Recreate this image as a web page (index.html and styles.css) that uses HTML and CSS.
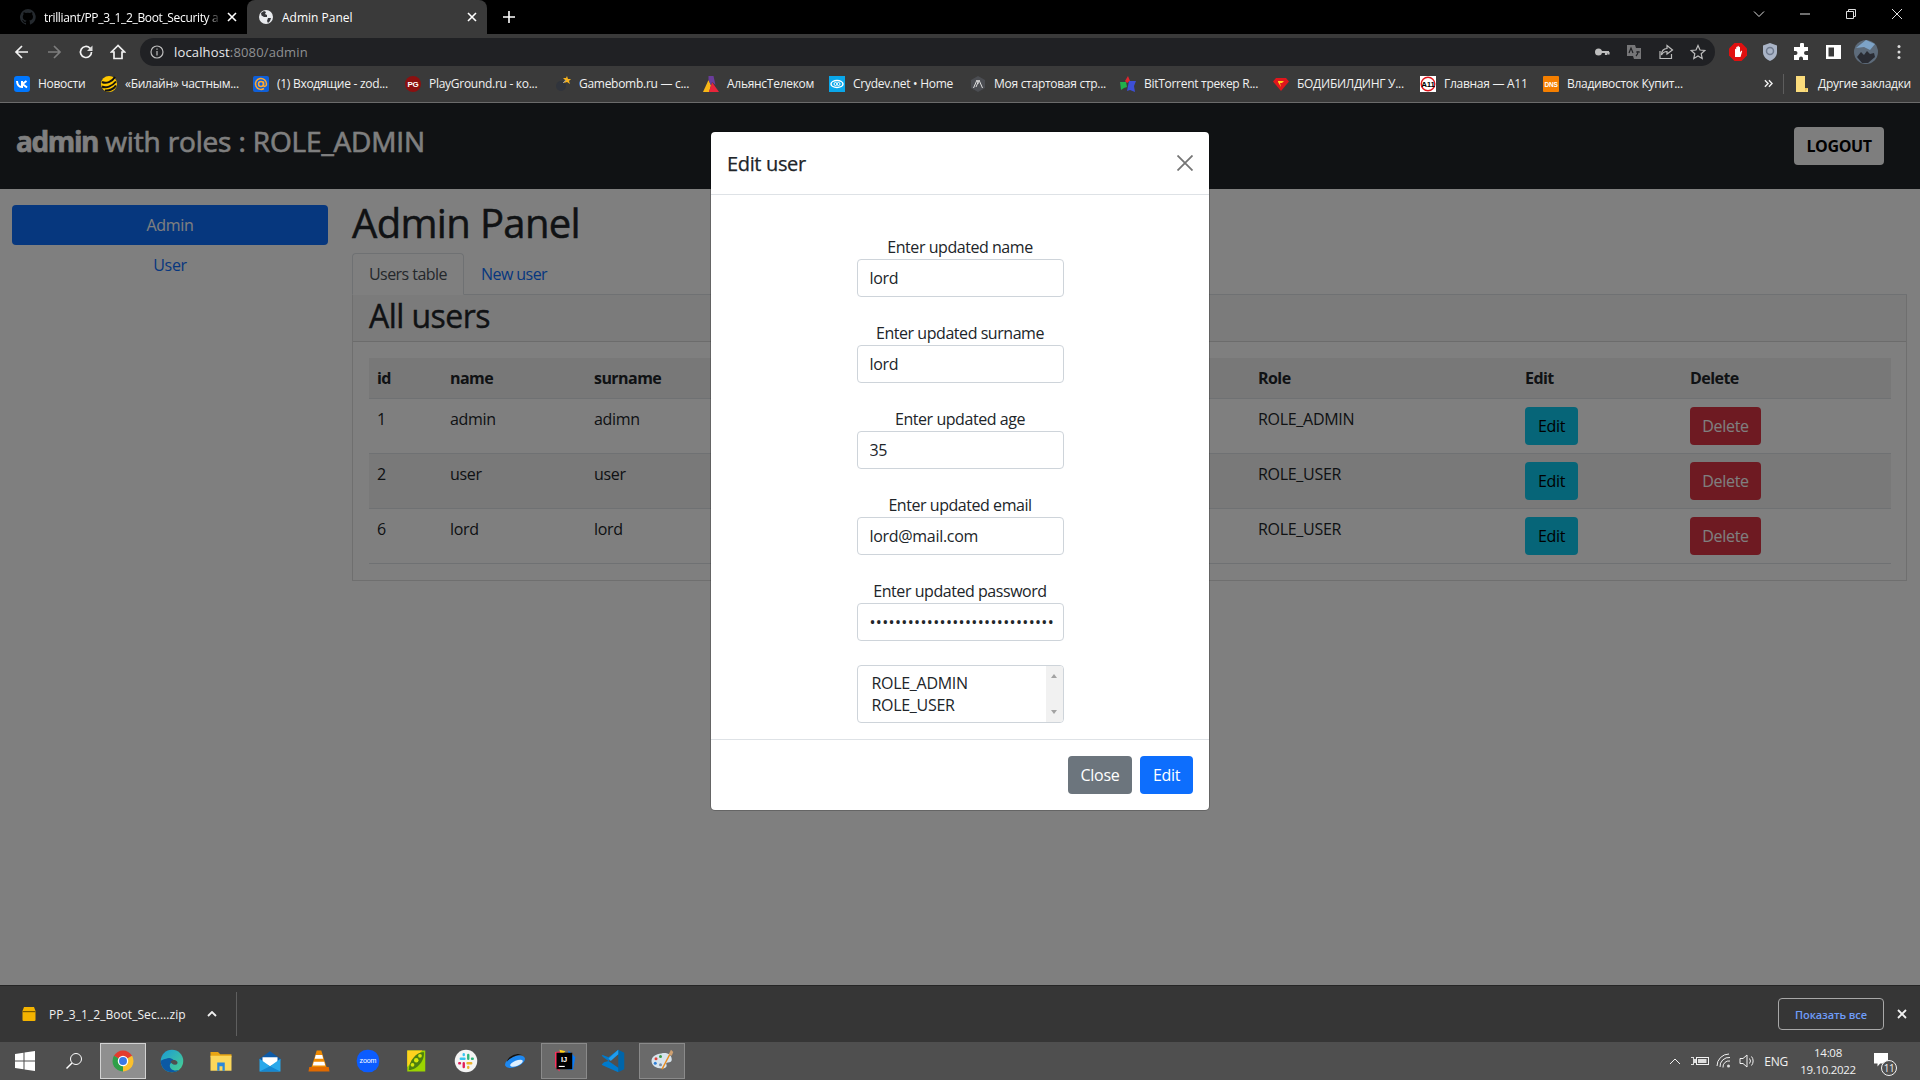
FILE: index.html
```html
<!DOCTYPE html>
<html lang="en">
<head>
    <meta charset="UTF-8">
    <title>Admin Panel</title>
    <link rel="stylesheet" href="styles.css">
</head>
<body>

    <!-- Browser tabs -->
    <div class="tabstrip">
        <div class="tab tab-first">
            <svg class="fav" viewBox="0 0 16 16"><path fill="#24292e" d="M8 0a8 8 0 0 0-2.5 15.6c.4.1.5-.2.5-.4v-1.4c-2.2.5-2.7-1-2.7-1-.4-.9-.9-1.2-.9-1.2-.7-.5.1-.5.1-.5.8.1 1.2.8 1.2.8.7 1.2 1.9.9 2.3.7.1-.5.3-.9.5-1.1-1.8-.2-3.7-.9-3.7-4 0-.9.3-1.6.8-2.1-.1-.2-.4-1 .1-2.1 0 0 .7-.2 2.2.8a7.6 7.6 0 0 1 4 0c1.5-1 2.2-.8 2.2-.8.4 1.1.2 1.9.1 2.1.5.6.8 1.3.8 2.1 0 3.1-1.9 3.7-3.7 3.9.3.3.6.8.6 1.5v2.2c0 .2.1.5.6.4A8 8 0 0 0 8 0z"/></svg>
            <span class="tab-title tab-fade">trilliant/PP_3_1_2_Boot_Security a</span>
            <svg class="tab-x" viewBox="0 0 10 10"><path d="M1 1l8 8M9 1l-8 8"/></svg>
        </div>
        <div class="tab tab-active">
            <svg class="fav" viewBox="0 0 16 16"><circle cx="8" cy="8" r="7" fill="#e8eaed"/><path fill="#35363a" d="M3 4l3-2 2 1-1 2 2 1v2H6L3.5 6.5zM10 9h3l-1 3-2 2-1-2z"/></svg>
            <span class="tab-title">Admin Panel</span>
            <svg class="tab-x" viewBox="0 0 10 10"><path d="M1 1l8 8M9 1l-8 8"/></svg>
        </div>
        <svg class="new-tab" viewBox="0 0 12 12"><path d="M6 0v12M0 6h12"/></svg>
        <div class="window-btns">
            <svg viewBox="0 0 12 12"><path d="M1 3.5l5 5 5-5"/></svg>
            <svg viewBox="0 0 12 12"><path d="M1 6h10"/></svg>
            <svg viewBox="0 0 12 12"><path d="M1.5 3.5h7v7h-7zM3.5 3.500v-2h7v7h-2"/></svg>
            <svg viewBox="0 0 12 12"><path d="M1 1l10 10M11 1L1 11"/></svg>
        </div>
    </div>

    <!-- Address bar -->
    <div class="toolbar">
        <div class="nav-btns">
            <svg viewBox="0 0 16 16"><path d="M14 8H2.5M8 2L2 8l6 6"/></svg>
            <svg class="off" viewBox="0 0 16 16"><path d="M2 8h11.5M8 2l6 6-6 6"/></svg>
            <svg viewBox="0 0 16 16"><path d="M13.5 8a5.500 5.500 0 1 1-1.600-3.900L13.500 6"/><path class="solid" d="M14.5 1.500v5.500H9z"/></svg>
            <svg viewBox="0 0 16 16"><path d="M8 1.500L1.500 8H4v6.500h8V8h2.500z"/></svg>
        </div>
        <div class="omnibox">
            <svg class="info" viewBox="0 0 14 14"><circle cx="7" cy="7" r="6"/><path d="M7 6v4.500M7 3.500v1.300"/></svg>
            <span class="url">localhost<span class="url-dim">:8080/admin</span></span>
            <div class="omni-icons">
                <svg viewBox="0 0 16 16"><circle class="solid" cx="4.500" cy="8" r="3.500"/><path class="thick" d="M7 8h8M12 8v3M14.500 8v2.500"/></svg>
                <svg viewBox="0 0 16 16"><path class="solid" d="M1 1h8l1 3h5v11H8l-1-3H1z" opacity=".55"/><path class="dark" d="M3 9l2-5 2 5M10 8h4M12 7v1c0 2-1 3-2 4"/></svg>
                <svg viewBox="0 0 16 16"><path d="M2 7v7.500h11.500V10M9 1.500L14.500 6 9 10V7.500C6 7.500 4.500 9 3.500 11 3.500 7 5.500 4.500 9 4.500z"/></svg>
                <svg viewBox="0 0 16 16"><path d="M8 1.500l2 4.500 4.800.5-3.600 3.200 1 4.800L8 12l-4.200 2.500 1-4.800-3.600-3.200 4.800-.5z"/></svg>
            </div>
        </div>
        <div class="ext-icons">
            <svg viewBox="0 0 18 18"><path fill="#e01010" d="M5.500 0h7L18 5.500v7L12.500 18h-7L0 12.500v-7z"/><path fill="#fff" d="M6 14V6.500c0-1 1.200-1 1.200 0V4.500c0-1 1.300-1 1.300 0v-1c0-1 1.300-1 1.300 0v1c0-1 1.200-1 1.200 0v5l1-1.500c.6-.8 1.500 0 1 .8L11.500 14z"/></svg>
            <svg viewBox="0 0 18 18"><path fill="#a9b4c6" d="M9 0l7 2.500V9c0 4-3 7.500-7 9-4-1.500-7-5-7-9V2.500z"/><circle cx="9" cy="8" r="3.500" fill="none" stroke="#6f7a8e" stroke-width="1.500"/></svg>
            <svg viewBox="0 0 18 18"><path fill="#fff" d="M7 1.500a2 2 0 0 1 4 0V4h4v4h-2a2 2 0 0 0 0 4h2v5H10v-1.500a2 2 0 0 0-4 0V17H1v-5h1.500a2 2 0 0 0 0-4H1V4h6z"/></svg>
            <svg viewBox="0 0 18 18"><path fill="#fff" fill-rule="evenodd" d="M1 2h15v14H1zM3.500 4.500v9H9v-9z"/></svg>
            <svg viewBox="0 0 24 24"><circle cx="12" cy="12" r="12" fill="#5d6b7a"/><path fill="#7da3c7" d="M2 8L12 0l9 4-5 6-6-3z"/><path fill="#2a2c33" d="M3 17l4-5 3 3 3-4 3 3 4-1 1 4-7 6H8z"/></svg>
            <svg viewBox="0 0 4 16"><circle class="solid" cx="2" cy="2.500" r="1.500"/><circle class="solid" cx="2" cy="8" r="1.500"/><circle class="solid" cx="2" cy="13.500" r="1.500"/></svg>
        </div>
    </div>

    <!-- Bookmarks -->
    <div class="bookmarks">
        <div class="bm"><svg viewBox="0 0 16 16"><rect width="16" height="16" rx="3" fill="#0077ff"/><path fill="none" stroke="#fff" stroke-width="2" d="M3 5c.2 4 2 6 5 6V5M12.500 5L8.500 8l4.500 3.500"/></svg><span>Новости</span></div>
        <div class="bm"><svg viewBox="0 0 16 16"><circle cx="8" cy="8" r="8" fill="#ffc800"/><path fill="none" stroke="#111" stroke-width="2" d="M1 6c4 2 10 0 13-5M1 10.500c4 2 10 0 14-5M4 14.500c4 .5 9-1.500 11-5"/></svg><span>«Билайн» частным...</span></div>
        <div class="bm"><svg viewBox="0 0 16 16"><rect width="16" height="16" rx="2" fill="#0f5fd8"/><circle cx="8" cy="8" r="2.500" fill="none" stroke="#ffa930" stroke-width="1.500"/><path fill="none" stroke="#ffa930" stroke-width="1.500" d="M10.500 5.500v3.500c0 2 3 2 3 -1A5.500 5.500 0 1 0 11 12.500"/></svg><span>(1) Входящие - zod...</span></div>
        <div class="bm"><svg viewBox="0 0 16 16"><circle cx="8" cy="8" r="8" fill="#8c1010"/><text x="8" y="11" class="ico-text" font-size="8" fill="#fff">PG</text></svg><span>PlayGround.ru - ко...</span></div>
        <div class="bm"><svg viewBox="0 0 16 16"><circle cx="6" cy="10" r="5" fill="#30343c"/><path fill="#f5b21e" d="M12 0l1 3 3 0-2 2 1 3-3-2-3 1 1-3-2-2 3 0z"/><path stroke="#999" d="M8 7l3-3"/></svg><span>Gamebomb.ru — с...</span></div>
        <div class="bm"><svg viewBox="0 0 16 16"><path fill="#f7b617" d="M0 16L5.500 4 8 9.500 6 16z"/><path fill="#e8253a" d="M6 16L9 6l7 10z"/><path fill="#6a3d9a" d="M5.500 0h5L12.500 9 9 6l-1 3.500-2.500-5.500z"/></svg><span>АльянсТелеком</span></div>
        <div class="bm"><svg viewBox="0 0 16 16"><rect width="16" height="16" fill="#0aa7ea"/><ellipse cx="8" cy="8" rx="6" ry="3.500" fill="none" stroke="#fff" stroke-width="1.500"/><circle cx="6.500" cy="8" r="1.500" fill="none" stroke="#fff"/><circle cx="9.500" cy="8" r="1.500" fill="none" stroke="#fff"/></svg><span>Crydev.net • Home</span></div>
        <div class="bm"><svg viewBox="0 0 16 16"><path fill="#4b4d52" d="M8 0l7 4v8l-7 4-7-4V4z"/><path fill="none" stroke="#ddd" d="M3.500 12L7 4l1.500 3.500M12.500 12L9 4 6 11"/></svg><span>Моя стартовая стр...</span></div>
        <div class="bm"><svg viewBox="0 0 16 16"><path fill="#e0262e" d="M8 0l2 5-3 2-2-2z"/><path fill="#20b14c" d="M0 6h6l1 5-3 1-3 2z"/><path fill="#3d4fd6" d="M9 5h7l-2 5 1 6-5-2-3 1z"/></svg><span>BitTorrent трекер R...</span></div>
        <div class="bm"><svg viewBox="0 0 16 16"><path fill="#e0161c" d="M3 2h10l3 3.500L8 15 0 5.500z"/><path fill="#ffd21e" d="M5 5h6L9 7H7l1 4-3-5z"/></svg><span>БОДИБИЛДИНГ У...</span></div>
        <div class="bm"><svg viewBox="0 0 16 16"><rect width="16" height="16" fill="#fff"/><circle cx="8" cy="8" r="6.800" fill="none" stroke="#e0161c" stroke-width="1.400"/><text x="8" y="11" class="ico-text" font-size="8" fill="#000">A11</text></svg><span>Главная — А11</span></div>
        <div class="bm"><svg viewBox="0 0 16 16"><rect width="16" height="16" rx="1" fill="#f57f00"/><text x="8" y="11" class="ico-text" font-size="6.500" fill="#fff">DNS</text></svg><span>Владивосток Купит...</span></div>
        <div class="bm-more">
            <svg class="more-ico" viewBox="0 0 10 10"><path d="M1 1.500L4.500 5 1 8.500M5.500 1.500L9 5 5.500 8.500"/></svg>
            <i class="bm-sep"></i>
            <svg class="folder-ico" viewBox="0 0 12 16"><path fill="#fbdc7c" d="M0 0h9v12h3v4H0z"/><path fill="#e8c35a" d="M9 12h3l-3 4z"/></svg>
            <span>Другие закладки</span>
        </div>
    </div>

    <!-- Page -->
    <div class="page">
        <nav class="navbar">
            <h3 class="nav-title"><b>admin</b> with roles : ROLE_ADMIN</h3>
            <button class="btn-logout">LOGOUT</button>
        </nav>

        <div class="content">
            <aside class="sidebar">
                <a class="pill pill-active">Admin</a>
                <a class="pill">User</a>
            </aside>

            <main class="main">
                <h1>Admin Panel</h1>
                <div class="nav-tabs">
                    <a class="nav-tab nav-tab-active">Users table</a>
                    <a class="nav-tab">New user</a>
                </div>
                <div class="card">
                    <div class="card-header"><h2>All users</h2></div>
                    <div class="card-body">
                        <table>
                            <colgroup>
                                <col class="c-id"><col class="c-name"><col class="c-surname"><col class="c-age"><col class="c-email"><col class="c-role"><col class="c-edit"><col class="c-delete">
                            </colgroup>
                            <thead>
                                <tr><th>id</th><th>name</th><th>surname</th><th></th><th></th><th>Role</th><th>Edit</th><th>Delete</th></tr>
                            </thead>
                            <tbody>
                                <tr><td>1</td><td>admin</td><td>adimn</td><td></td><td></td><td>ROLE_ADMIN</td><td><button class="btn btn-info">Edit</button></td><td><button class="btn btn-danger">Delete</button></td></tr>
                                <tr class="striped"><td>2</td><td>user</td><td>user</td><td></td><td></td><td>ROLE_USER</td><td><button class="btn btn-info">Edit</button></td><td><button class="btn btn-danger">Delete</button></td></tr>
                                <tr><td>6</td><td>lord</td><td>lord</td><td></td><td></td><td>ROLE_USER</td><td><button class="btn btn-info">Edit</button></td><td><button class="btn btn-danger">Delete</button></td></tr>
                            </tbody>
                        </table>
                    </div>
                </div>
            </main>
        </div>

        <!-- Edit modal -->
        <div class="backdrop">
            <div class="modal">
                <div class="modal-header">
                    <h5>Edit user</h5>
                    <svg class="modal-close" viewBox="0 0 16 16"><path d="M.5.5l15 15M15.500.5l-15 15"/></svg>
                </div>
                <form class="modal-body">
                    <label>Enter updated name<input type="text" value="lord"></label>
                    <label>Enter updated surname<input type="text" value="lord"></label>
                    <label>Enter updated age<input type="text" value="35"></label>
                    <label>Enter updated email<input type="text" value="lord@mail.com"></label>
                    <label>Enter updated password<input type="password" value="$2a$10$abcdefghijklmnopqrstuv"></label>
                    <div class="role-select">
                        <div class="role-list">
                            <div>ROLE_ADMIN</div>
                            <div>ROLE_USER</div>
                        </div>
                        <div class="role-scroll">
                            <i class="arrow-up"></i>
                            <i class="arrow-down"></i>
                        </div>
                    </div>
                </form>
                <div class="modal-footer">
                    <button class="btn btn-secondary">Close</button>
                    <button class="btn btn-primary">Edit</button>
                </div>
            </div>
        </div>
    </div>

    <!-- Downloads shelf -->
    <div class="downloads">
        <svg class="zip-ico" viewBox="0 0 16 16"><path fill="#f4b400" d="M3 1h10l1.500 4v9a1 1 0 0 1-1 1h-11a1 1 0 0 1-1-1V5z"/><path fill="#7a5a00" d="M1.500 5h13v1.200h-13z"/></svg>
        <span class="dl-name">PP_3_1_2_Boot_Sec....zip</span>
        <svg class="dl-caret" viewBox="0 0 10 6"><path d="M1 5l4-4 4 4"/></svg>
        <i class="dl-sep"></i>
        <button class="show-all">Показать все</button>
        <svg class="dl-close" viewBox="0 0 10 10"><path d="M1 1l8 8M9 1l-8 8"/></svg>
    </div>

    <!-- Windows taskbar -->
    <div class="taskbar">
        <div class="task task-sys">
            <svg viewBox="0 0 20 20"><path fill="#fff" d="M0 3l8.500-1.200V9.500H0zM9.500 1.600L20 0v9.500H9.500zM0 10.500h8.500v7.700L0 17zM9.500 10.500H20V20L9.500 18.400z"/></svg>
        </div>
        <div class="task task-sys">
            <svg viewBox="0 0 20 20"><circle cx="12" cy="8" r="5.500" fill="none" stroke="#fff" stroke-width="1"/><path stroke="#fff" stroke-width="1.400" d="M8 12L2.500 17.500"/></svg>
        </div>
        <div class="task task-on">
            <svg viewBox="0 0 32 32"><path fill="#e33b2e" d="M16 16L3.900 9A14 14 0 0 1 28.100 9z"/><path fill="#fbc02d" d="M16 16L28.100 9A14 14 0 0 1 16 30z"/><path fill="#2e9f48" d="M16 16L16 30A14 14 0 0 1 3.900 9z"/><circle cx="16" cy="16" r="7" fill="#fff"/><circle cx="16" cy="16" r="5.300" fill="#3b78e7"/></svg>
        </div>
        <div class="task">
            <svg viewBox="0 0 32 32"><defs><linearGradient id="eg" x1="0" y1="0" x2="1" y2="1"><stop offset="0" stop-color="#1a9ad6"/><stop offset="1" stop-color="#4bd28f"/></linearGradient></defs><circle cx="16" cy="16" r="15" fill="url(#eg)"/><path fill="#0c59a4" d="M1 16c0 9 7 15 15 15 4 0 7-1 9-3-7 2-12-1-12-6 0-3 3-5 7-5-3-5-8-6-12-4-4 1-7 2-7 3z"/><path fill="#4f4f4f" d="M14 17c2-3 7-3 9 0 1 2 0 4-3 4s-5-2-6-4z"/></svg>
        </div>
        <div class="task">
            <svg viewBox="0 0 32 32"><path fill="#e8a513" d="M2 4h10l3 3h15v4H2z"/><path fill="#fbd75b" d="M2 9h28v20H2z"/><path fill="#2b88d8" d="M11 18h10v11h-3v-6h-4v6h-3z"/></svg>
        </div>
        <div class="task">
            <svg viewBox="0 0 32 32"><path fill="#0d5aa7" d="M16 3L2 13v3h28v-3z"/><path fill="#fff" d="M6 11h20v7l-10 5-10-5z"/><path fill="#29a8ea" d="M2 13l14 10 14-10v17H2z"/><path fill="#1587d1" d="M2 30l14-7 14 7z"/></svg>
        </div>
        <div class="task">
            <svg viewBox="0 0 32 32"><path fill="#f08a00" d="M13 2h6l7 22h-20z"/><path fill="#fff" d="M11.700 8h8.600l1.300 5H10.300zM9 17h14l1.300 5H7.700z"/><path fill="#e06a00" d="M3 24h26l1 6H2z"/></svg>
        </div>
        <div class="task">
            <svg viewBox="0 0 32 32"><rect x="1" y="1" width="30" height="30" rx="14" fill="#0b5cff"/><text x="16" y="19" class="ico-text ico-thin" font-size="9.500" fill="#fff">zoom</text></svg>
        </div>
        <div class="task">
            <svg viewBox="0 0 32 32"><rect x="3" y="2" width="24" height="28" fill="#9bd400"/><path fill="#ffd21e" d="M3 2h20L3 24z"/><path fill="#4d7f10" d="M5 28c0-12 10-24 20-24 2 10-8 24-20 24z"/><circle cx="10" cy="21" r="2.500" fill="#d5e80a"/><circle cx="15" cy="15" r="3" fill="#d5e80a"/><circle cx="20" cy="9" r="2.500" fill="#d5e80a"/></svg>
        </div>
        <div class="task">
            <svg viewBox="0 0 32 32"><circle cx="16" cy="16" r="15" fill="#f4f4f4"/><g fill="none" stroke-width="3.200" stroke-linecap="round"><path stroke="#36c5f0" d="M9 13h5M13 7v1"/><path stroke="#2eb67d" d="M19 8v5M25 13h-1"/><path stroke="#ecb22e" d="M23 19h-5M19 25v-1"/><path stroke="#e01e5a" d="M13 24v-5M7 19h1"/></g></svg>
        </div>
        <div class="task">
            <svg viewBox="0 0 32 32"><ellipse cx="16" cy="17" rx="14" ry="7" transform="rotate(-22 16 17)" fill="#1e88f0"/><ellipse cx="18" cy="19" rx="9" ry="3.500" transform="rotate(-22 18 19)" fill="#dff0ff"/><path fill="#111" d="M5 17C7 10 16 5 26 7 20 7 10 11 5 17z"/></svg>
        </div>
        <div class="task task-open">
            <svg viewBox="0 0 32 32"><path fill="#fe315d" d="M4 4l8-1-2 27-6-6z"/><path fill="#ffd11a" d="M10 1l8 2-6 6z"/><path fill="#087cfa" d="M22 2l9 9-3 17-8-1z"/><rect x="6" y="5" width="21" height="22" fill="#000"/><text x="16" y="17" class="ico-text" font-size="10" fill="#fff">IJ</text><path fill="#fff" d="M9 22.500h8v1.500H9z"/></svg>
        </div>
        <div class="task">
            <svg viewBox="0 0 32 32"><path fill="#0065a9" d="M23 1l8 4v22l-8 4z"/><path fill="#007acc" d="M23 1v30L2 21.500l-1-1 3-3 6-1.500L23 25V7L10 16l-6-4.500-3-2.500 1-1L10 11z"/><path fill="#1f9cf0" d="M23 1l-13 11.500 3 3.500L23 7z"/></svg>
        </div>
        <div class="task task-open">
            <svg viewBox="0 0 32 32"><path fill="#d7e3ec" d="M15 6c8-2 14 2 14 8 0 3-2 4-5 4-2 0-3 1-2 3 1 3-2 5-6 5C8 26 2 22 2 16 2 10 8 7 15 6z"/><circle cx="8" cy="13" r="2" fill="#e0433b"/><circle cx="14" cy="10" r="2" fill="#3d9a46"/><circle cx="7" cy="19" r="2" fill="#2f7fd6"/><circle cx="14" cy="21" r="2" fill="#7e8ea0"/><path stroke="#e98a1c" stroke-width="2" d="M16 27L27 6"/><path fill="#cfa070" d="M25 7l3-6 3 3-2 5z"/></svg>
        </div>
        <div class="tray">
            <svg class="tray-caret" viewBox="0 0 12 7"><path d="M1 6l5-5 5 5"/></svg>
            <svg class="tray-ico tray-batt" viewBox="0 0 18 12"><path class="solid" d="M0 2h3v2h2v4H3v2H0v-1h2V3H0z"/><rect x="5.500" y="2.500" width="12" height="7"/><path class="solid" d="M7 4h8.500v4H7z"/></svg>
            <svg class="tray-ico" viewBox="0 0 16 16"><path d="M1 13A12 12 0 0 1 13 1M4 14A9 9 0 0 1 14 4.500M7 14.500A6 6 0 0 1 14 8"/><circle class="solid" cx="12.500" cy="13" r="1.500"/></svg>
            <svg class="tray-ico" viewBox="0 0 16 16"><path d="M1 5.500h3L8 2v12l-4-3.500H1zM10.500 5.500a4 4 0 0 1 0 5M12.500 3.500a7 7 0 0 1 0 9"/></svg>
            <span class="tray-lang">ENG</span>
            <div class="tray-clock"><span>14:08</span><span>19.10.2022</span></div>
            <div class="tray-notif">
                <svg viewBox="0 0 18 16"><path fill="#fff" d="M1 0h16v12H8l-3 3.500V12H1z"/></svg>
                <span class="notif-badge">11</span>
            </div>
        </div>
    </div>

</body>
</html>
```

FILE: styles.css
```css
/* General page */
* {
    box-sizing: border-box;
}
body {
    margin: 0;
    width: 1920px;
    height: 1080px;
    overflow: hidden;
    display: flex;
    flex-direction: column;
    font-family: "Open Sans", "Noto Sans", sans-serif;
    font-size: 16px;
    color: #212529;
    background: #fff;
}
svg {
    display: block;
    flex: none;
}
.ico-text {
    font-family: "Liberation Sans", sans-serif;
    font-weight: 700;
    text-anchor: middle;
}
.ico-thin {
    font-weight: 400;
}
.solid {
    fill: #dcdcdc;
    stroke: none;
}

/* Browser tabs */
.tabstrip {
    height: 34px;
    flex: none;
    background: #000;
    display: flex;
    align-items: stretch;
    color: #fff;
    font-size: 12px;
}
.tab {
    width: 240px;
    display: flex;
    align-items: center;
    padding: 0 10px 0 20px;
    border-radius: 8px 8px 0 0;
}
.tab-first {
    width: 247px;
    letter-spacing: -.35px;
}
.tab-active {
    background: #3a3a3a;
    padding-left: 11px;
}
.fav {
    width: 16px;
    height: 16px;
    margin-right: 8px;
}
.tab-title {
    flex: 1;
    white-space: nowrap;
}
.tab-fade {
    -webkit-mask-image: linear-gradient(to right, #000 92%, transparent);
    mask-image: linear-gradient(to right, #000 92%, transparent);
}
.tab-x {
    width: 10px;
    height: 10px;
    margin-left: 6px;
    fill: none;
    stroke: #fff;
    stroke-width: 1.6;
}
.new-tab {
    width: 12px;
    height: 12px;
    margin: 11px 0 0 16px;
    fill: none;
    stroke: #fff;
    stroke-width: 1.6;
}
.window-btns {
    margin-left: auto;
    display: flex;
    align-items: center;
    gap: 34px;
    padding-right: 17px;
    margin-top: -6px;
}
.window-btns svg {
    width: 12px;
    height: 12px;
    fill: none;
    stroke: #dedede;
}

/* Address bar */
.toolbar {
    height: 32px;
    flex: none;
    background: #3a3a3a;
    display: flex;
    align-items: flex-end;
}
.nav-btns {
    width: 140px;
    height: 28px;
    padding-left: 14px;
    display: flex;
    align-items: center;
    gap: 16px;
}
.nav-btns svg {
    width: 16px;
    height: 16px;
    fill: none;
    stroke: #f1f1f1;
    stroke-width: 1.7;
}
.nav-btns svg.off {
    stroke: #7d7d7d;
}
.omnibox {
    width: 1575px;
    height: 28px;
    background: #202124;
    border-radius: 14px;
    display: flex;
    align-items: center;
    padding: 0 9px 0 10px;
    font-size: 13px;
    letter-spacing: .15px;
}
.info {
    width: 14px;
    height: 14px;
    fill: none;
    stroke: #bdbdbd;
    stroke-width: 1.2;
    margin-right: 10px;
}
.url {
    color: #e8eaed;
}
.url-dim {
    color: #8f9092;
}
.omni-icons {
    margin-left: auto;
    display: flex;
    gap: 16px;
}
.omni-icons svg {
    width: 16px;
    height: 16px;
    fill: none;
    stroke: #bdbdbd;
    stroke-width: 1.2;
}
.omni-icons .thick {
    stroke-width: 2.2;
}
.omni-icons .solid {
    fill: #bdbdbd;
}
.omni-icons .dark {
    stroke: #202124;
}
.ext-icons {
    height: 28px;
    display: flex;
    align-items: center;
    padding-left: 14px;
}
.ext-icons svg {
    width: 18px;
    height: 18px;
    margin-right: 14px;
}
.ext-icons svg:nth-child(5) {
    width: 24px;
    height: 24px;
    margin: 0 19px 0 -3px;
}
.ext-icons svg:last-child {
    width: 4px;
    height: 16px;
    margin: 0;
}

/* Bookmarks */
.bookmarks {
    height: 37px;
    flex: none;
    padding: 0 0 1px 14px;
    background: #3a3a3a;
    border-bottom: 1px solid #6b6b6b;
    display: grid;
    grid-template-columns: 87px 152px 152px 150px 148px 126px 141px 150px 153px 147px 123px 221px 1fr;
    align-items: center;
    color: #f1f1f1;
    font-size: 12px;
    letter-spacing: -.28px;
    white-space: nowrap;
}
.bm {
    display: flex;
    align-items: center;
    gap: 8px;
}
.bm svg {
    width: 16px;
    height: 16px;
}
.bm-more {
    display: flex;
    align-items: center;
}
.more-ico {
    width: 9px;
    height: 9px;
    fill: none;
    stroke: #f1f1f1;
    stroke-width: 1.6;
}
.bm-sep {
    width: 1px;
    height: 20px;
    background: #5d5d5d;
    margin: 0 12px 0 10px;
}
.folder-ico {
    width: 12px;
    height: 16px;
    margin-right: 10px;
}

/* Page and navbar */
.page {
    height: 882px;
    flex: none;
    position: relative;
    display: flex;
    flex-direction: column;
}
.navbar {
    height: 86px;
    flex: none;
    background: #212529;
    display: flex;
    justify-content: space-between;
    align-items: center;
    padding: 0 36px 0 16px;
}
.nav-title {
    margin: -11px 0 0;
    font-size: 28px;
    font-weight: 400;
    line-height: 34px;
    letter-spacing: -.15px;
    color: #fff;
    -webkit-text-stroke: .6px #fff;
}
.nav-title b {
    letter-spacing: -1.4px;
}
.btn-logout {
    width: 90px;
    height: 38px;
    border: 0;
    border-radius: 4px;
    background: #fcfcfc;
    color: #000;
    font: 700 16px "Open Sans", sans-serif;
    letter-spacing: -.4px;
}

/* Sidebar */
.content {
    display: flex;
    flex: 1;
}
.sidebar {
    width: 352px;
    padding: 16px 24px 0 12px;
}
.pill {
    display: block;
    height: 40px;
    line-height: 40px;
    text-align: center;
    color: #0d6efd;
    border-radius: 4px;
    letter-spacing: -.3px;
}
.pill-active {
    background: #0d6efd;
    color: #fff;
}

/* Main column */
.main {
    width: 1555px;
}
h1 {
    margin: 10px 0 6px;
    font-size: 40px;
    font-weight: 400;
    line-height: 48px;
    letter-spacing: -.65px;
    -webkit-text-stroke: .5px #212529;
}
.nav-tabs {
    display: flex;
    height: 42px;
    border-bottom: 1px solid #dee2e6;
}
.nav-tab {
    height: 42px;
    padding: 8px 16px;
    line-height: 24px;
    color: #0d6efd;
    letter-spacing: -.55px;
    border: 1px solid transparent;
    border-radius: 4px 4px 0 0;
}
.nav-tab-active {
    color: #495057;
    background: #fff;
    border-color: #dee2e6 #dee2e6 #fff;
}
.card {
    height: 286px;
    border: 1px solid rgba(0, 0, 0, .125);
    border-top: 0;
}
.card-header {
    height: 47px;
    padding: 0 16px;
    background: rgba(0, 0, 0, .03);
    border-bottom: 1px solid rgba(0, 0, 0, .125);
}
h2 {
    margin: 0;
    font-size: 32px;
    font-weight: 400;
    line-height: 42px;
    letter-spacing: -.55px;
    -webkit-text-stroke: .4px #212529;
}
.card-body {
    padding: 16px;
}

/* Users table */
table {
    width: 1522px;
    table-layout: fixed;
    border-collapse: collapse;
    letter-spacing: -.3px;
}
.c-id { width: 73px; }
.c-name { width: 144px; }
.c-surname { width: 200px; }
.c-age { width: 200px; }
.c-email { width: 264px; }
.c-role { width: 267px; }
.c-edit { width: 165px; }
.c-delete { width: 209px; }
thead tr {
    background: #f0f0f0;
}
th {
    height: 40px;
    padding: 8px;
    text-align: left;
    font-weight: 700;
    letter-spacing: -.55px;
    border-bottom: 1px solid #dee2e6;
}
td {
    height: 55px;
    padding: 9px 8px 8px;
    vertical-align: top;
    border-bottom: 1px solid #dee2e6;
}
td .btn {
    margin-top: -1px;
}
.striped {
    background: #f2f2f2;
}

/* Buttons */
.btn {
    height: 38px;
    padding: 0;
    border: 0;
    border-radius: 4px;
    font: 400 16px "Open Sans", sans-serif;
    letter-spacing: -.3px;
    display: block;
}
.btn-info {
    width: 53px;
    background: #0dcaf0;
    color: #000;
}
.btn-danger {
    width: 71px;
    background: #dc3545;
    color: #fff;
}
.btn-secondary {
    width: 64px;
    background: #6c757d;
    color: #fff;
}
.btn-primary {
    width: 53px;
    background: #0d6efd;
    color: #fff;
}

/* Modal */
.backdrop {
    position: absolute;
    inset: 0;
    background: rgba(0, 0, 0, .5);
    display: flex;
    justify-content: center;
    align-items: flex-start;
    padding-top: 28px;
}
.modal {
    width: 500px;
    height: 680px;
    background: #fff;
    border: 1px solid rgba(0, 0, 0, .2);
    background-clip: padding-box;
    border-radius: 5px;
    display: flex;
    flex-direction: column;
    letter-spacing: -.45px;
}
.modal-header {
    height: 63px;
    flex: none;
    padding: 0 16px;
    border-bottom: 1px solid #dee2e6;
    display: flex;
    justify-content: space-between;
    align-items: center;
}
h5 {
    margin: 0;
    font-size: 20px;
    font-weight: 400;
    letter-spacing: -.35px;
    -webkit-text-stroke: .25px #212529;
}
.modal-close {
    width: 16px;
    height: 16px;
    fill: none;
    stroke: #757575;
    stroke-width: 1.8;
}
.modal-body {
    flex: 1;
    padding: 40px 0 0;
    display: flex;
    flex-direction: column;
    align-items: center;
}
label {
    display: block;
    width: 207px;
    height: 62px;
    margin-bottom: 24px;
    line-height: 24px;
    text-align: center;
    white-space: nowrap;
    color: #212529;
}
input {
    display: block;
    width: 207px;
    height: 38px;
    padding: 6px 12px;
    border: 1px solid #ced4da;
    border-radius: 4px;
    font: 400 16px "Open Sans", sans-serif;
    letter-spacing: -.3px;
    color: #212529;
    background: #fff;
}
input[type="password"] {
    letter-spacing: .35px;
    padding-right: 4px;
}
.role-select {
    width: 207px;
    height: 58px;
    border: 1px solid #ced4da;
    border-radius: 4px;
    display: flex;
    overflow: hidden;
    color: #212529;
    flex: none;
}
.role-list {
    flex: 1;
    padding: 6px 0 0 14px;
    line-height: 22px;
    letter-spacing: -.3px;
}
.role-scroll {
    width: 17px;
    background: #f1f1f1;
    display: flex;
    flex-direction: column;
    justify-content: space-between;
    align-items: center;
    padding: 8px 0;
}
.role-scroll i {
    width: 0;
    height: 0;
    border-left: 3.5px solid transparent;
    border-right: 3.5px solid transparent;
}
.arrow-up {
    border-bottom: 4px solid #a3a3a3;
}
.arrow-down {
    border-top: 4px solid #a3a3a3;
}
.modal-footer {
    height: 71px;
    flex: none;
    border-top: 1px solid #dee2e6;
    display: flex;
    justify-content: flex-end;
    align-items: center;
    gap: 8px;
    padding: 0 16px;
}

/* Downloads shelf */
.downloads {
    height: 57px;
    flex: none;
    background: #363636;
    border-top: 1px solid #252525;
    display: flex;
    align-items: center;
    color: #f1f1f1;
    font-size: 12px;
    letter-spacing: .05px;
}
.zip-ico {
    width: 16px;
    height: 16px;
    margin: 0 12px 0 21px;
}
.dl-name {
    width: 158px;
    white-space: nowrap;
}
.dl-caret {
    width: 10px;
    height: 6px;
    fill: none;
    stroke: #f1f1f1;
    stroke-width: 1.8;
}
.dl-sep {
    width: 1px;
    height: 44px;
    background: #5f5f5f;
    margin-left: 19px;
}
.show-all {
    margin-left: auto;
    width: 106px;
    height: 32px;
    background: transparent;
    border: 1px solid #a8a8a8;
    border-radius: 4px;
    color: #6f9dfa;
    font: 600 11px "Open Sans", sans-serif;
    letter-spacing: -.1px;
}
.dl-close {
    width: 10px;
    height: 10px;
    margin: 0 13px;
    fill: none;
    stroke: #f1f1f1;
    stroke-width: 1.8;
}

/* Windows taskbar */
.taskbar {
    height: 38px;
    flex: none;
    background: #4f4f4f;
    display: flex;
    color: #f1f1f1;
    font-size: 12px;
    letter-spacing: -.2px;
}
.task {
    width: 49px;
    display: flex;
    align-items: center;
    justify-content: center;
    margin: 1px 0;
}
.task svg {
    width: 24px;
    height: 24px;
}
.task-sys svg {
    width: 20px;
    height: 20px;
}
.task-on {
    background: #8f8f8f;
    border: 1px solid #d2d2d2;
    width: 46px;
    margin: 1px 1px 1px 2px;
}
.task-open {
    background: #6a6a6a;
    border: 1px solid #8a8a8a;
    width: 46px;
    margin: 1px 1px 1px 2px;
}
.tray {
    margin-left: auto;
    display: flex;
    align-items: center;
}
.tray-caret {
    width: 12px;
    height: 7px;
    fill: none;
    stroke: #f1f1f1;
    margin-right: 10px;
}
.tray-ico {
    width: 16px;
    height: 16px;
    fill: none;
    stroke: #f1f1f1;
    margin-right: 7px;
}
.tray-batt {
    width: 18px;
    height: 12px;
}
.tray-lang {
    margin: 0 9px 0 2px;
}
.tray-clock {
    width: 62px;
    display: flex;
    flex-direction: column;
    align-items: center;
    line-height: 17px;
    font-size: 11.5px;
    letter-spacing: -.3px;
    margin-right: 8px;
}
.tray-notif {
    width: 30px;
    height: 30px;
    position: relative;
    margin-right: 23px;
}
.tray-notif svg {
    width: 16px;
    height: 14px;
    margin: 7px 0 0 6px;
}
.notif-badge {
    position: absolute;
    left: 14px;
    top: 14px;
    width: 16px;
    height: 16px;
    border-radius: 50%;
    border: 1px solid #f1f1f1;
    background: #4f4f4f;
    font-size: 10px;
    line-height: 14px;
    text-align: center;
    letter-spacing: -.5px;
}
```
